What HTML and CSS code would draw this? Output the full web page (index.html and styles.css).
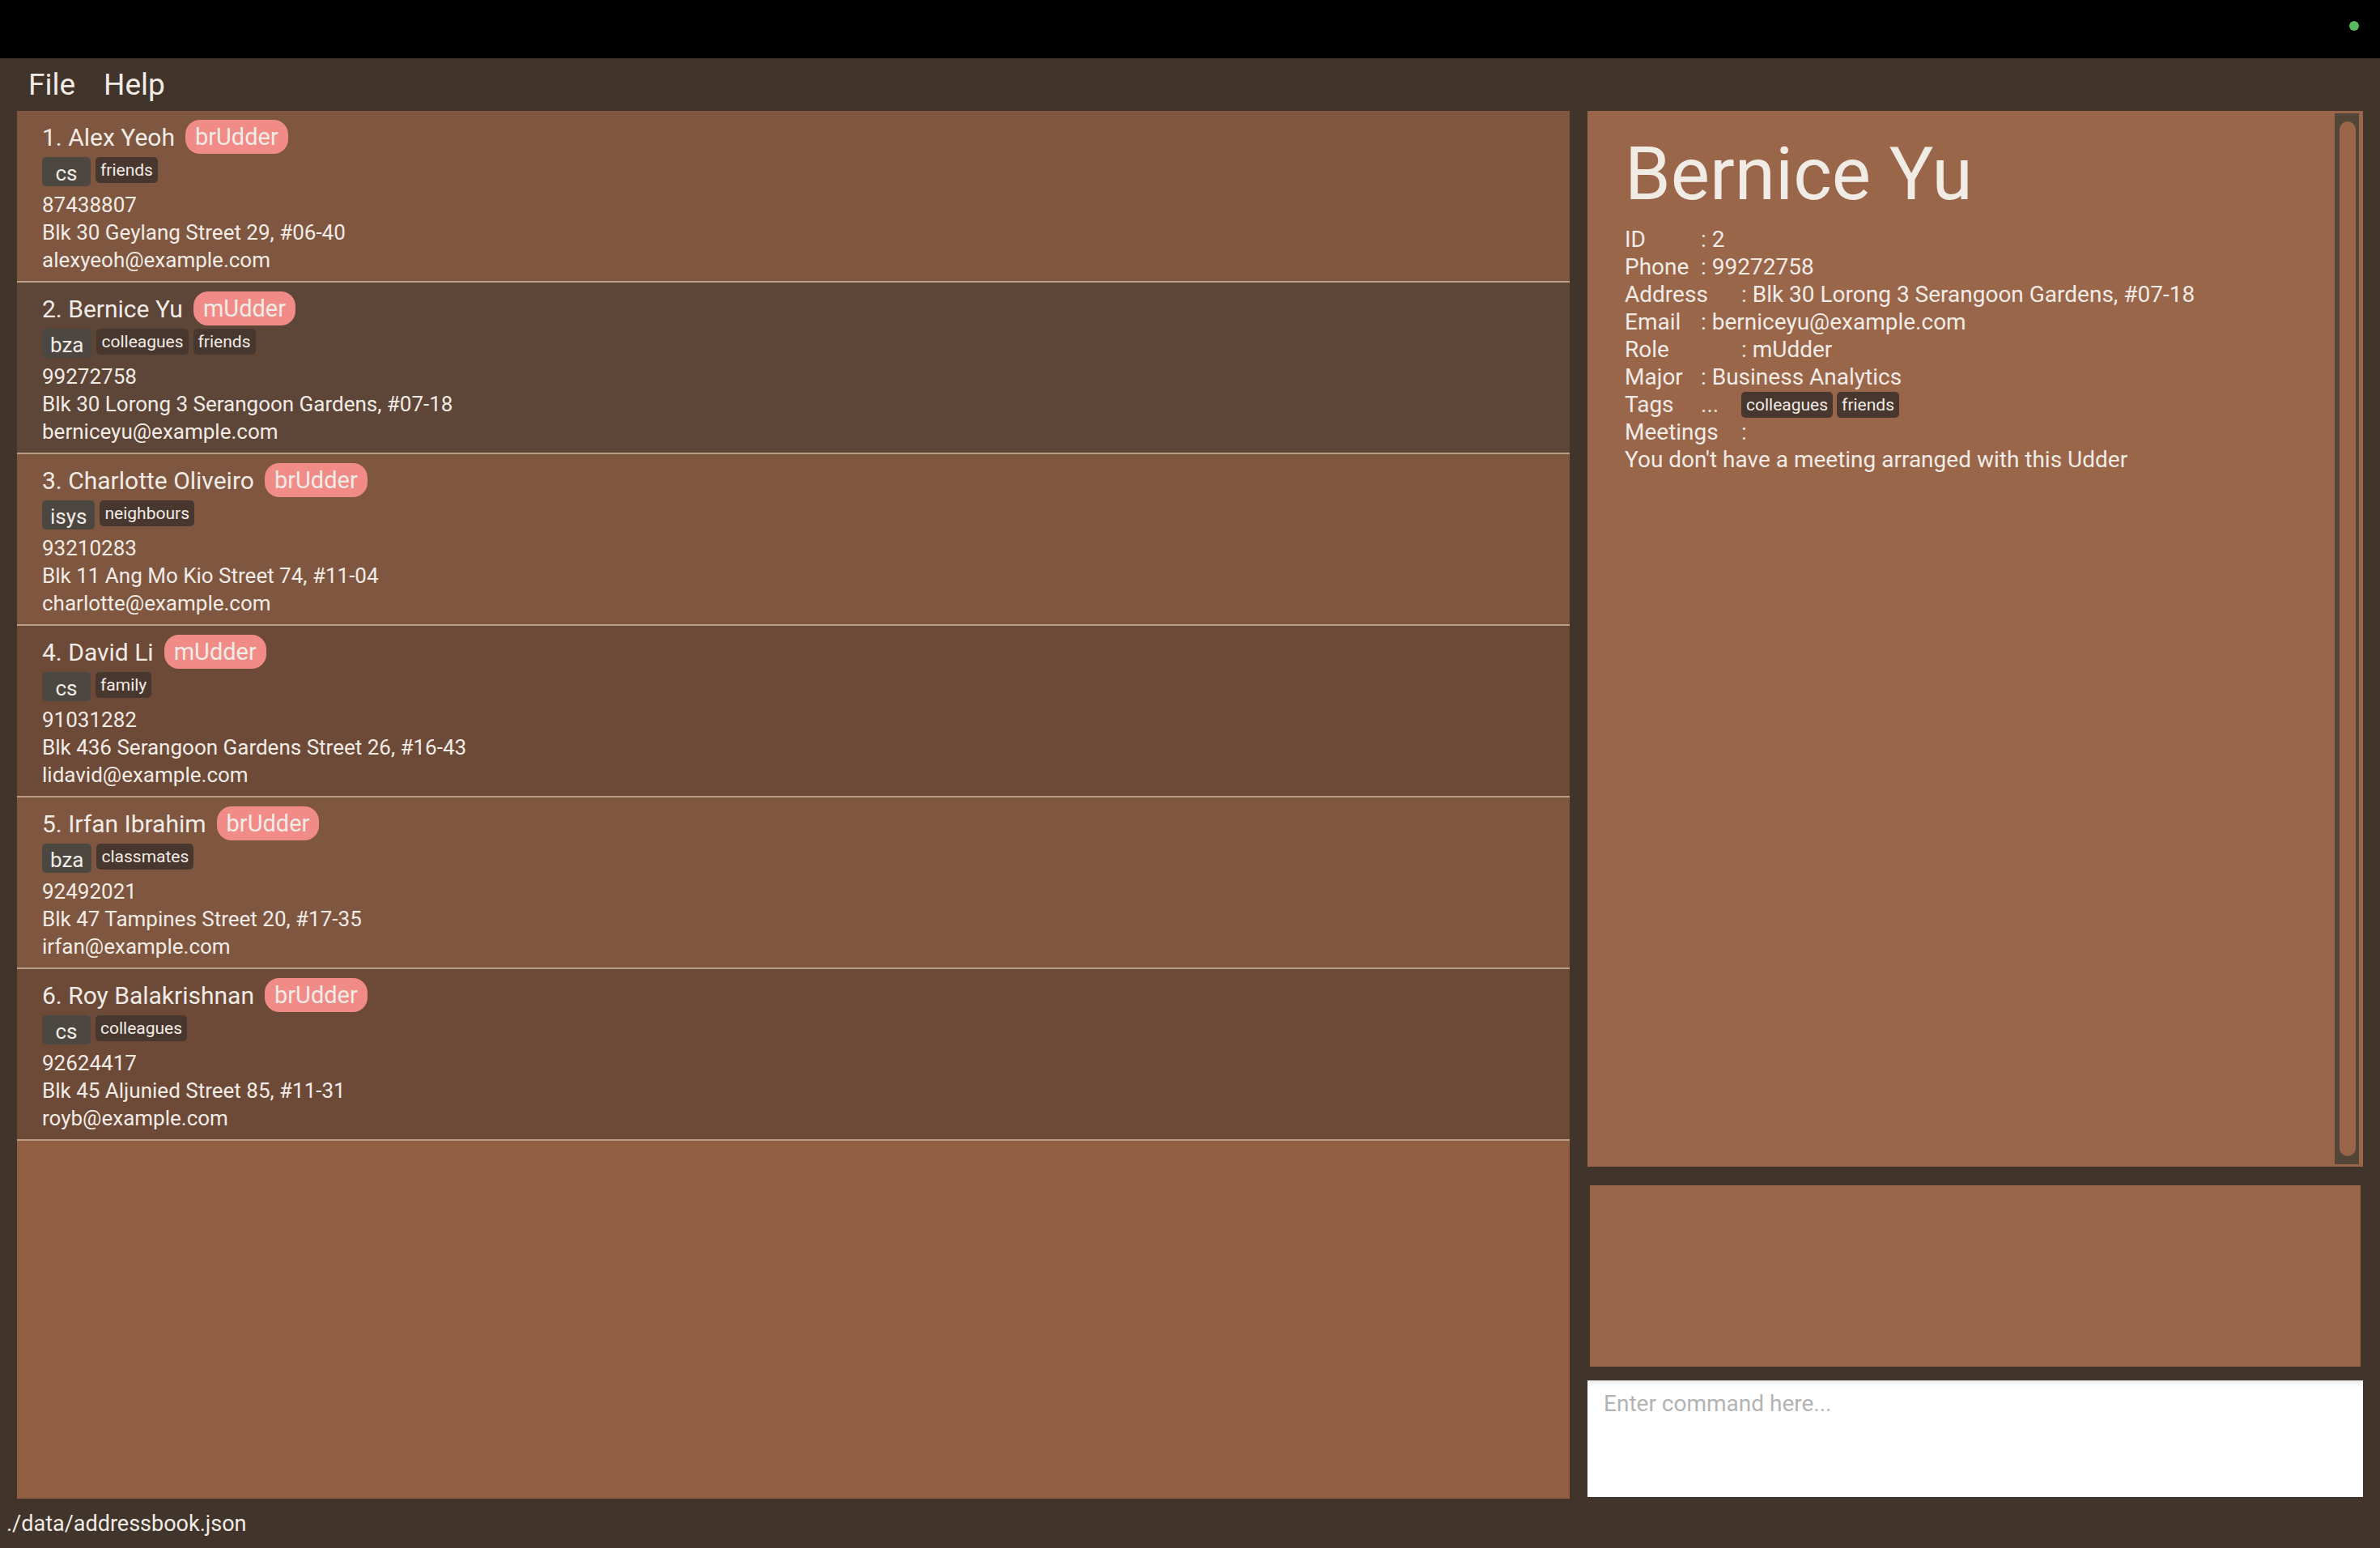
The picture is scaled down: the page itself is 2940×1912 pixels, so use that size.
FILE: index.html
```html
<!DOCTYPE html>
<html lang="en">
<head>
  <meta charset="UTF-8">
  <title>Udder</title>
  <link rel="stylesheet" href="styles.css">
</head>
<body>
  <div class="titlebar"><span class="dot"></span></div>

  <div class="menubar">
    <span class="menu">File</span>
    <span class="menu">Help</span>
  </div>

  <div class="main">
    <div class="list">
      <div class="card odd">
        <div class="name-row"><span class="name">1. Alex Yeoh</span><span class="role">brUdder</span></div>
        <div class="tags"><span class="major">cs</span><span class="tag">friends</span></div>
        <div class="line">87438807</div>
        <div class="line">Blk 30 Geylang Street 29, #06-40</div>
        <div class="line">alexyeoh@example.com</div>
      </div>
      <div class="card selected">
        <div class="name-row"><span class="name">2. Bernice Yu</span><span class="role">mUdder</span></div>
        <div class="tags"><span class="major">bza</span><span class="tag">colleagues</span><span class="tag">friends</span></div>
        <div class="line">99272758</div>
        <div class="line">Blk 30 Lorong 3 Serangoon Gardens, #07-18</div>
        <div class="line">berniceyu@example.com</div>
      </div>
      <div class="card odd">
        <div class="name-row"><span class="name">3. Charlotte Oliveiro</span><span class="role">brUdder</span></div>
        <div class="tags"><span class="major">isys</span><span class="tag">neighbours</span></div>
        <div class="line">93210283</div>
        <div class="line">Blk 11 Ang Mo Kio Street 74, #11-04</div>
        <div class="line">charlotte@example.com</div>
      </div>
      <div class="card even">
        <div class="name-row"><span class="name">4. David Li</span><span class="role">mUdder</span></div>
        <div class="tags"><span class="major">cs</span><span class="tag">family</span></div>
        <div class="line">91031282</div>
        <div class="line">Blk 436 Serangoon Gardens Street 26, #16-43</div>
        <div class="line">lidavid@example.com</div>
      </div>
      <div class="card odd">
        <div class="name-row"><span class="name">5. Irfan Ibrahim</span><span class="role">brUdder</span></div>
        <div class="tags"><span class="major">bza</span><span class="tag">classmates</span></div>
        <div class="line">92492021</div>
        <div class="line">Blk 47 Tampines Street 20, #17-35</div>
        <div class="line">irfan@example.com</div>
      </div>
      <div class="card even">
        <div class="name-row"><span class="name">6. Roy Balakrishnan</span><span class="role">brUdder</span></div>
        <div class="tags"><span class="major">cs</span><span class="tag">colleagues</span></div>
        <div class="line">92624417</div>
        <div class="line">Blk 45 Aljunied Street 85, #11-31</div>
        <div class="line">royb@example.com</div>
      </div>
    </div>

    <div class="side">
      <div class="detail">
        <div class="detail-body">
          <div class="title">Bernice Yu</div>
          <div class="row"><span class="lbl">ID</span>: 2</div>
          <div class="row"><span class="lbl">Phone</span>: 99272758</div>
          <div class="row"><span class="lbl wide">Address</span>: Blk 30 Lorong 3 Serangoon Gardens, #07-18</div>
          <div class="row"><span class="lbl">Email</span>: berniceyu@example.com</div>
          <div class="row"><span class="lbl wide">Role</span>: mUdder</div>
          <div class="row"><span class="lbl">Major</span>: Business Analytics</div>
          <div class="row"><span class="lbl">Tags</span><span class="dots">...</span><span class="tag">colleagues</span><span class="tag">friends</span></div>
          <div class="row"><span class="lbl wide">Meetings</span>:</div>
          <div class="row">You don't have a meeting arranged with this Udder</div>
        </div>
        <div class="scroll"><div class="thumb"></div></div>
      </div>
      <div class="result"></div>
      <div class="command">
        <input type="text" placeholder="Enter command here...">
      </div>
    </div>
  </div>

  <div class="status">./data/addressbook.json</div>
</body>
</html>
```

FILE: styles.css
```css
body {
  margin: 0;
  background: #41342b;
  font-family: Roboto, "Liberation Sans", sans-serif;
  color: #f1ebe6;
  width: 2940px;
  height: 1912px;
  overflow: hidden;
}
.titlebar {
  height: 72px;
  background: #000;
  display: flex;
  justify-content: flex-end;
  align-items: center;
  padding-right: 26px;
  box-sizing: border-box;
}
.dot {
  width: 12px;
  height: 12px;
  border-radius: 50%;
  background: #5cb85c;
  margin-top: -8px;
}
.menubar {
  height: 65px;
  display: flex;
  align-items: center;
  padding-left: 35px;
  gap: 35px;
  font-size: 37px;
}
.main {
  display: flex;
  height: 1714px;
  padding: 0 21px;
  gap: 22px;
}
.list {
  width: 1918px;
  background: #935f43;
}
.card {
  height: 212px;
  box-sizing: border-box;
  padding: 11px 31px 0;
  border-bottom: 2px solid #b99d85;
  font-size: 26px;
}
.odd { background: #7f5740; }
.even { background: #6d4a37; }
.selected { background: #5d4537; }
.name-row {
  display: flex;
  align-items: center;
  height: 42px;
  gap: 13px;
}
.name {
  font-size: 30px;
}
.role {
  background: #f08b88;
  height: 42px;
  line-height: 42px;
  padding: 0 12px;
  border-radius: 18px;
  font-size: 29px;
}
.tags {
  display: flex;
  align-items: flex-start;
  gap: 6px;
  margin-top: 4px;
  height: 36px;
}
.major {
  background: #4c4741;
  border-radius: 5px;
  height: 36px;
  min-width: 60px;
  box-sizing: border-box;
  text-align: center;
  line-height: 40px;
  font-size: 26px;
  padding: 0 10px;
}
.tag {
  background: #48372e;
  border-radius: 5px;
  height: 32px;
  line-height: 32px;
  padding: 0 6px;
  font-size: 21px;
}
.line {
  height: 34px;
  line-height: 34px;
}
.tags + .line {
  margin-top: 6px;
}
.side {
  width: 958px;
  display: flex;
  flex-direction: column;
}
.detail {
  height: 1304px;
  background: #99664a;
  display: flex;
}
.detail-body {
  flex: 1;
  padding: 20px 0 0 46px;
  font-size: 28px;
}
.title {
  font-size: 91px;
  line-height: 116px;
  margin-bottom: 6px;
}
.row {
  height: 34px;
  line-height: 34px;
  display: flex;
  align-items: center;
}
.lbl {
  width: 94px;
}
.lbl.wide {
  width: 144px;
}
.dots {
  width: 50px;
}
.row .tag {
  margin-right: 5px;
}
.scroll {
  width: 30px;
  margin: 3px 5px 3px 0;
  background: #544539;
  padding: 10px 4px 10px 6px;
  box-sizing: border-box;
}
.thumb {
  height: 100%;
  background: #99664a;
  border-radius: 10px;
}
.result {
  height: 224px;
  margin: 23px 3px 0;
  background: #99664a;
}
.command {
  height: 144px;
  margin-top: 17px;
  background: #fff;
  box-shadow: inset 0 8px 8px -6px rgba(0,0,0,0.12);
}
.command input {
  width: 100%;
  border: none;
  background: transparent;
  outline: none;
  font-family: Roboto, "Liberation Sans", sans-serif;
  font-size: 28px;
  padding: 12px 20px;
  box-sizing: border-box;
}
.command input::placeholder {
  color: #b3b3b3;
}
.status {
  height: 61px;
  padding-left: 8px;
  font-size: 27px;
  line-height: 62px;
}
```
